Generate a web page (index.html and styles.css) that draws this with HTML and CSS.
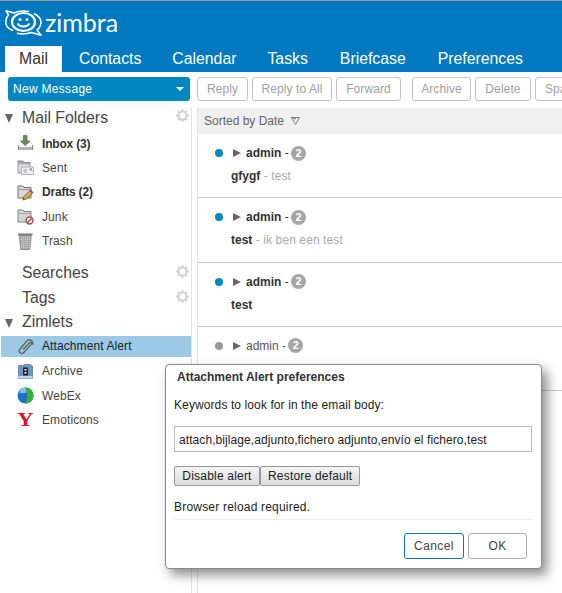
FILE: index.html
```html
<!DOCTYPE html>
<html lang="en">
<head>
    <meta charset="UTF-8">
    <meta name="viewport" content="width=device-width, initial-scale=1.0">
    <title>Zimbra</title>
    <link rel="stylesheet" href="styles.css">
</head>
<body>
    <header class="top">
        <div class="logo">
            <svg width="37" height="26" viewBox="0 0 37 26" fill="none" stroke="#fff">
                <path d="M8 20.5C2.5 18.5 .5 15 .8 11.5 1 8.5 2.5 6 3.5 5L1 .8 9 3C13 1 19 .7 24 1.6" stroke-width="1.5" stroke-linejoin="round"/>
                <path d="M29 3.5C34 6 36.3 9.5 36 13 35.7 16 34 18.5 32 20L36 25.2 26.5 22.5C22 24 16 24.2 12 23.2" stroke-width="1.5" stroke-linejoin="round"/>
                <ellipse cx="18.5" cy="12" rx="11.5" ry="9" stroke-width="2.2"/>
                <circle cx="15" cy="9.5" r="1.6" fill="#fff" stroke="none"/>
                <circle cx="22" cy="9.5" r="1.6" fill="#fff" stroke="none"/>
                <path d="M12.5 13.5C15 17.5 22 17.5 24.5 13.5" stroke-width="1.8"/>
            </svg>
            <span class="logo-text">zimbra</span>
        </div>
        <nav class="tabs">
            <a class="tab active">Mail</a>
            <a class="tab t-contacts">Contacts</a>
            <a class="tab t-calendar">Calendar</a>
            <a class="tab t-tasks">Tasks</a>
            <a class="tab t-briefcase">Briefcase</a>
            <a class="tab t-prefs">Preferences</a>
        </nav>
    </header>

    <div class="toolbar">
        <button class="new-msg"><span>New Message</span><i class="caret"></i></button>
        <div class="actions">
            <button class="btn b-reply">Reply</button>
            <button class="btn b-all">Reply to All</button>
            <button class="btn b-fwd">Forward</button>
            <button class="btn b-arch">Archive</button>
            <button class="btn b-del">Delete</button>
            <button class="btn b-spam">Spam</button>
        </div>
    </div>

    <div class="content">
        <aside class="sidebar">
            <div class="section"><i class="tri"></i><span>Mail Folders</span>
                <svg class="gear" width="13" height="13" viewBox="0 0 14 14"><circle cx="7" cy="7" r="4.4" fill="none" stroke="#d4d4d4" stroke-width="2.6"/><path d="M7 0V14M0 7H14M2 2L12 12M12 2L2 12" stroke="#d4d4d4" stroke-width="2" stroke-dasharray="2.2 9.6 2.2 0"/></svg>
            </div>
            <div class="item bold">
                <svg width="17" height="17" viewBox="0 0 17 17"><path d="M6.5 .5H10V6H13L8.2 10.5 3.5 6H6.5Z" fill="#6b8a5e" stroke="#4c6343" stroke-width=".7"/><path d="M1.5 10V14.5H15.5V10" fill="none" stroke="#8a8a8a" stroke-width="1.2"/><rect x="2" y="12" width="13" height="3" fill="#b4b4b4"/></svg>
                <span>Inbox (3)</span>
            </div>
            <div class="item">
                <svg width="17" height="17" viewBox="0 0 17 17"><path d="M1 2H6L7 3.5H13V14H1Z" fill="#a9acaf" stroke="#777" stroke-width=".8"/><rect x="1.5" y="5.5" width="11" height="8" fill="#dfe1e3"/><rect x="4.5" y="8" width="12" height="7.5" fill="#eef1f6" stroke="#8b96a5" stroke-width=".7"/><path d="M6.5 11H10M6.5 13H10" stroke="#8b96a5"/><rect x="12.5" y="9.5" width="2.5" height="2" fill="#c77"/></svg>
                <span>Sent</span>
            </div>
            <div class="item bold">
                <svg width="17" height="17" viewBox="0 0 17 17"><path d="M1 2H6L7 3.5H14V14H1Z" fill="#d9d9d9" stroke="#666" stroke-width=".9"/><path d="M1.5 5.5H14" stroke="#888" stroke-width=".8"/><path d="M6 16L7 12.5 13.5 6 16 8.5 9.5 15Z" fill="#e4b04c" stroke="#4f4126" stroke-width=".8"/><path d="M13 6.5L15.5 9" stroke="#c33" stroke-width="1.4"/></svg>
                <span>Drafts (2)</span>
            </div>
            <div class="item">
                <svg width="17" height="17" viewBox="0 0 17 17"><path d="M1 2H6L7 3.5H14V14H1Z" fill="#d3d5d7" stroke="#777" stroke-width=".9"/><path d="M1.5 5.5H14" stroke="#999" stroke-width=".8"/><circle cx="12.5" cy="12.5" r="3.4" fill="#fff" stroke="#b5474b" stroke-width="1.5"/><path d="M10.2 14.8L14.8 10.2" stroke="#b5474b" stroke-width="1.5"/></svg>
                <span>Junk</span>
            </div>
            <div class="item">
                <svg width="17" height="17" viewBox="0 0 17 17"><rect x="1" y=".5" width="14.5" height="1.8" fill="#777"/><path d="M2.2 2.5H14.3L12.8 16.5H3.7Z" fill="#aaa" stroke="#777" stroke-width=".7"/><path d="M4.5 4V16M6.5 4V16M8.5 4V16M10.5 4V16M12.5 4V16" stroke="#ddd" stroke-width=".7" stroke-dasharray="1 1"/></svg>
                <span>Trash</span>
            </div>

            <div class="section sec-searches"><span>Searches</span>
                <svg class="gear" width="13" height="13" viewBox="0 0 14 14"><circle cx="7" cy="7" r="4.4" fill="none" stroke="#d4d4d4" stroke-width="2.6"/><path d="M7 0V14M0 7H14M2 2L12 12M12 2L2 12" stroke="#d4d4d4" stroke-width="2" stroke-dasharray="2.2 9.6 2.2 0"/></svg>
            </div>
            <div class="section"><span>Tags</span>
                <svg class="gear" width="13" height="13" viewBox="0 0 14 14"><circle cx="7" cy="7" r="4.4" fill="none" stroke="#d4d4d4" stroke-width="2.6"/><path d="M7 0V14M0 7H14M2 2L12 12M12 2L2 12" stroke="#d4d4d4" stroke-width="2" stroke-dasharray="2.2 9.6 2.2 0"/></svg>
            </div>
            <div class="section sec-zimlets"><i class="tri"></i><span>Zimlets</span></div>
            <div class="item selected">
                <svg width="17" height="17" viewBox="0 0 17 17" fill="none" stroke="#666" stroke-width="1.5"><path d="M6 11.5L12.5 4.8C13.8 3.6 15.2 5 14.2 6.4L6.5 14.8C4.5 16.6 .9 14 2.8 11.2L10.2 2.6C12.4 .5 17 2.8 15.4 6.6"/></svg>
                <span>Attachment Alert</span>
            </div>
            <div class="item">
                <svg width="17" height="17" viewBox="0 0 17 17"><path d="M1.5 2.5H6L7 1.5H12.5L15.5 3V15.5H1.5Z" fill="#6f97c4" stroke="#4b6f99" stroke-width=".7"/><rect x="1.5" y="13" width="14" height="2.5" fill="#c9d7e6"/><rect x="6" y="4.5" width="5" height="8" fill="#1c2530"/><rect x="7.5" y="6" width="2" height="1.5" fill="#fff"/><rect x="7.5" y="9" width="2" height="1.5" fill="#fff"/></svg>
                <span>Archive</span>
            </div>
            <div class="item">
                <svg width="17" height="17" viewBox="0 0 17 17"><circle cx="8.5" cy="8.5" r="8" fill="#1d6fc9"/><path d="M8.5 .5A8 8 0 0 1 8.5 16.5C10.5 12 10.5 5 8.5 .5Z" fill="#35b22c"/><path d="M8.5 .5C5 .8 2.5 3 2 5.5 4.5 6.5 7 6.5 9.5 5.5 9.5 4 9 2 8.5 .5Z" fill="#7cc4ee"/></svg>
                <span>WebEx</span>
            </div>
            <div class="item">
                <span class="yahoo">Y</span>
                <span>Emoticons</span>
            </div>
        </aside>

        <main class="list">
            <div class="sort">Sorted by Date
                <svg width="9" height="8" viewBox="0 0 9 8" fill="none" stroke="#666" stroke-width=".8"><path d="M.5 .5H8.5L4.5 7.5ZM.5 .5L5 2"/></svg>
            </div>
            <div class="msg">
                <div class="msg-top unread"><i class="dot"></i><i class="arrow"></i><b>admin</b> - <em class="count">2</em></div>
                <div class="msg-sub"><b>gfygf</b> - test</div>
            </div>
            <div class="msg">
                <div class="msg-top unread"><i class="dot"></i><i class="arrow"></i><b>admin</b> - <em class="count">2</em></div>
                <div class="msg-sub"><b>test</b> - ik ben een test</div>
            </div>
            <div class="msg">
                <div class="msg-top unread"><i class="dot"></i><i class="arrow"></i><b>admin</b> - <em class="count">2</em></div>
                <div class="msg-sub"><b>test</b></div>
            </div>
            <div class="msg">
                <div class="msg-top"><i class="dot grey"></i><i class="arrow"></i>admin - <em class="count">2</em></div>
            </div>
        </main>
    </div>

    <div class="dialog">
        <div class="dialog-title">Attachment Alert preferences</div>
        <div class="dialog-body">
            <p class="label">Keywords to look for in the email body:</p>
            <input class="keywords" type="text" value="attach,bijlage,adjunto,fichero adjunto,envío el fichero,test">
            <div class="pair">
                <button class="grey-btn b-disable">Disable alert</button>
                <button class="grey-btn">Restore default</button>
            </div>
            <p class="note">Browser reload required.</p>
        </div>
        <div class="dialog-foot">
            <button class="foot-btn focus">Cancel</button>
            <button class="foot-btn b-ok">OK</button>
        </div>
    </div>
</body>
</html>
```

FILE: styles.css
```css
html, body {
    height: 100%;
}
body {
    margin: 0;
    font-family: "Liberation Sans", Arial, sans-serif;
    background-color: #fff;
    color: #333;
    overflow: hidden;
    position: relative;
}
button {
    font-family: inherit;
}

/* header */
.top {
    background-color: #0079c0;
    border-top: 1px solid #999;
    height: 71px;
    box-sizing: content-box;
    display: flex;
    flex-direction: column;
}
.logo {
    height: 45px;
    padding-left: 5px;
    display: flex;
    align-items: flex-start;
    color: #fff;
}
.logo svg {
    margin-top: 9px;
    flex: none;
}
.logo-text {
    font-family: Lato, sans-serif;
    font-size: 25px;
    font-weight: 400;
    line-height: 26px;
    margin-top: 8px;
    margin-left: 3px;
}
.tabs {
    display: flex;
    height: 26px;
    padding-left: 5px;
}
.tab {
    color: #fff;
    font-size: 15.8px;
    line-height: 26px;
    font-weight: normal;
}
.tab.active {
    background-color: #fff;
    color: #333;
    width: 57px;
    text-align: center;
}
.t-contacts { margin-left: 17px; }
.t-calendar { margin-left: 31px; }
.t-tasks { margin-left: 31px; }
.t-briefcase { margin-left: 32px; }
.t-prefs { margin-left: 32px; }

/* toolbar */
.toolbar {
    display: flex;
    height: 24px;
    margin-top: 5px;
    padding-left: 8px;
}
.new-msg {
    width: 182px;
    height: 24px;
    background-color: #0087c3;
    border: none;
    border-radius: 3px;
    color: #fff;
    font-size: 12px;
    letter-spacing: .3px;
    padding: 0 6px 0 5px;
    display: flex;
    align-items: center;
    justify-content: space-between;
    flex: none;
}
.caret {
    width: 0;
    height: 0;
    border-left: 4px solid transparent;
    border-right: 4px solid transparent;
    border-top: 4px solid #fff;
}
.actions {
    display: flex;
    margin-left: 7px;
}
.btn {
    flex: none;
    height: 24px;
    background-color: #fff;
    border: 1px solid #c4c4c4;
    border-radius: 3px;
    color: #a0a0a0;
    font-size: 12px;
    letter-spacing: .1px;
    padding: 0;
    margin-right: 4px;
}
.b-reply { width: 51px; }
.b-all { width: 80px; }
.b-fwd { width: 65px; margin-right: 11px; }
.b-arch { width: 59px; }
.b-del { width: 56px; }
.b-spam { width: 56px; text-align: left; padding-left: 9px; }

/* layout */
.content {
    display: flex;
    margin-top: 7px;
    height: 485px;
}
.sidebar {
    width: 191px;
    flex: none;
    border-right: 1px solid #e2e2e2;
}
.section {
    height: 19px;
    display: flex;
    align-items: center;
    font-size: 15.8px;
    color: #444;
    padding-left: 22px;
    position: relative;
}
.section .gear {
    position: absolute;
    right: 2px;
    top: 1px;
}
.tri {
    position: absolute;
    left: 5px;
    top: 6px;
    width: 0;
    height: 0;
    border-left: 4px solid transparent;
    border-right: 4px solid transparent;
    border-top: 9px solid #666;
}
.sec-searches {
    margin-top: 12px;
    margin-bottom: 6px;
}
.sec-zimlets {
    margin-top: 5px;
}
.item {
    height: 21px;
    margin-bottom: 3.4px;
    margin-left: 1px;
    padding-left: 16px;
    display: flex;
    align-items: center;
    font-size: 12px;
    letter-spacing: .1px;
    color: #444;
}
.section + .item {
    margin-top: 6px;
}
.sec-zimlets + .item {
    margin-top: 4px;
    margin-bottom: 4.4px;
}
.item svg,
.yahoo {
    width: 17px;
    height: 17px;
    flex: none;
    margin-right: 8px;
}
.item.bold {
    font-weight: bold;
    letter-spacing: -.2px;
    color: #333;
}
.item.selected {
    background-color: #9bc9e6;
    color: #222;
}
.yahoo {
    font-family: "Liberation Serif", serif;
    font-weight: bold;
    font-size: 18px;
    line-height: 17px;
    color: #e0102c;
    text-align: center;
    transform: scaleX(1.25);
}

/* message list */
.list {
    flex: 1;
    min-width: 0;
    margin-left: 5px;
    border-left: 1px solid #e2e2e2;
}
.sort {
    height: 26px;
    background-color: #f0f0f0;
    font-size: 12px;
    line-height: 26px;
    color: #666;
    padding-left: 6px;
}
.sort svg {
    margin-left: 4px;
}
.msg {
    height: 63.33px;
    border-bottom: 1px solid #c8c8c8;
    padding-left: 17px;
}
.msg-top {
    display: flex;
    align-items: center;
    height: 14px;
    padding-top: 12px;
    font-size: 12px;
    color: #555;
    white-space: pre;
}
.msg-top.unread {
    color: #333;
}
.msg-top b {
    color: #333;
}
.dot {
    width: 8px;
    height: 8px;
    border-radius: 50%;
    background-color: #0087c3;
    margin-right: 10px;
}
.dot.grey {
    background-color: #999;
}
.arrow {
    width: 0;
    height: 0;
    border-top: 4px solid transparent;
    border-bottom: 4px solid transparent;
    border-left: 8px solid #666;
    margin-right: 5px;
}
.count {
    display: inline-block;
    width: 15px;
    height: 15px;
    margin-left: -1px;
    border-radius: 50%;
    background-color: #a5a5a5;
    color: #fff;
    font-style: normal;
    font-weight: bold;
    font-size: 11px;
    line-height: 15px;
    text-align: center;
}
.msg-sub {
    margin-top: 9px;
    padding-left: 16px;
    font-size: 12px;
    color: #aaa;
    letter-spacing: .1px;
}
.msg-sub b {
    color: #333;
    letter-spacing: 0;
}

/* dialog sits over the page */
.dialog {
    position: absolute;
    left: 165px;
    top: 364px;
    width: 375px;
    height: 203px;
    background-color: #fff;
    border: 1px solid #8a8a8a;
    border-radius: 4px;
    box-shadow: 5px 6px 12px rgba(0, 0, 0, .45);
    display: flex;
    flex-direction: column;
}
.dialog-title {
    font-size: 12px;
    font-weight: bold;
    color: #333;
    padding: 5px 0 0 11px;
    line-height: 14px;
}
.dialog-body {
    padding: 0 8px;
    flex: 1;
}
.label {
    margin: 14px 0 0;
    font-size: 12px;
    line-height: 14px;
    color: #222;
    letter-spacing: .1px;
}
.keywords {
    display: block;
    width: 358px;
    height: 26px;
    box-sizing: border-box;
    margin-top: 14px;
    border: 1px solid #bbb;
    padding: 1px 4px 0;
    font-family: inherit;
    font-size: 12px;
    letter-spacing: .08px;
    color: #222;
    outline: none;
}
.pair {
    display: flex;
    margin-top: 14px;
}
.grey-btn {
    height: 20px;
    padding: 0 7px;
    background: linear-gradient(#f4f4f4, #dcdcdc);
    border: 1px solid #999;
    border-radius: 2px;
    font-size: 12px;
    letter-spacing: .2px;
    color: #222;
}
.b-disable {
    width: 86px;
    padding: 0;
}
.note {
    margin: 14px 0 0;
    padding-bottom: 5px;
    border-bottom: 1px solid #eee;
    font-size: 12px;
    line-height: 14px;
    letter-spacing: .2px;
    color: #222;
}
.dialog-foot {
    display: flex;
    justify-content: flex-end;
    gap: 4px;
    padding: 0 14px 9px 0;
}
.foot-btn {
    width: 60px;
    height: 26px;
    background-color: #fff;
    border: 1px solid #aaa;
    border-radius: 3px;
    font-size: 12px;
    letter-spacing: .4px;
    color: #444;
    padding: 0;
}
.foot-btn.b-ok {
    width: 59px;
}
.foot-btn.focus {
    border-color: #0079c0;
}
```
